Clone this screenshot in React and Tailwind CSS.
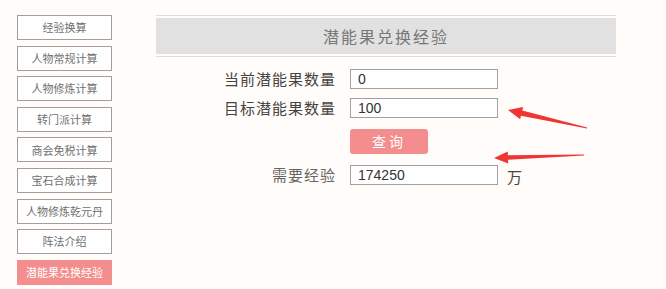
import React from 'react';

const menu = [
    '经验换算',
    '人物常规计算',
    '人物修炼计算',
    '转门派计算',
    '商会免税计算',
    '宝石合成计算',
    '人物修炼乾元丹',
    '阵法介绍',
    '潜能果兑换经验',
];

const CJK = { fontFamily: '"Noto Sans CJK SC", "Noto Sans", sans-serif' };
const NUM = { fontFamily: '"Liberation Sans", "Noto Sans CJK SC", sans-serif' };

function Row({ label, value, suffix, dim }) {
    return (
        <div className="flex items-center">
            <div className={`w-[180px] text-right text-[15px] tracking-[1px] leading-5 ${dim ? 'text-[#666]' : 'text-[#444]'}`}>
                {label}
            </div>
            <input
                readOnly
                value={value}
                style={NUM}
                className="ml-[14px] w-[148px] h-[20px] border border-[#a0a0a0] bg-white px-[7px] text-[14px] text-[#333] outline-none"
            />
            {suffix && <span className="ml-[9px] text-[15px] text-[#444] leading-5 mt-[4px]">{suffix}</span>}
        </div>
    );
}

export default function App() {
    return (
        <div className="relative w-[666px] h-[289px] bg-[#fffcf9] overflow-hidden flex" style={CJK}>
            {/* Sidebar */}
            <div className="pl-[17px] pt-[15px] flex flex-col gap-[5.6px]">
                {menu.map((m, i) => {
                    const active = i === menu.length - 1;
                    return (
                        <div
                            key={m}
                            className={`w-[95px] h-[25px] flex items-center justify-center text-[11px] ${
                                active
                                    ? 'bg-[#f48d8d] text-white'
                                    : 'border border-[#a59c9c] bg-white text-[#707070]'
                            }`}
                        >
                            {m}
                        </div>
                    );
                })}
            </div>

            {/* Main */}
            <div className="ml-[44px] pt-[15px] w-[460px]">
                <div className="border-y border-[#dcdcdc] py-[2px]">
                    <div className="h-[36px] bg-[#e1e1e1] flex items-center justify-center text-[16px] tracking-[2px] text-[#777]">
                        潜能果兑换经验
                    </div>
                </div>

                <div className="mt-[12px] flex flex-col">
                    <Row label="当前潜能果数量" value="0" />
                    <div className="mt-[9px]">
                        <Row label="目标潜能果数量" value="100" />
                    </div>
                    <div className="mt-[11px] pl-[194px]">
                        <button className="w-[78px] h-[25px] rounded-[3px] bg-[#f48d8d] text-white text-[14px] tracking-[3px] flex items-center justify-center">
                            查询
                        </button>
                    </div>
                    <div className="mt-[9px]">
                        <Row label="需要经验" value="174250" suffix="万" dim />
                    </div>
                </div>
            </div>

            {/* Annotation arrows */}
            <svg className="absolute left-0 top-0 pointer-events-none" width="666" height="289" viewBox="0 0 666 289">
                <polygon
                    fill="#f03535"
                    points="508,110 523.1,106.9 522.3,110.5 587.1,127.4 586.9,128.6 521.0,115.7 520.2,119.2"
                />
                <polygon
                    fill="#f03535"
                    points="494,158 507.8,151.5 507.9,155.2 583.98,154.4 584.02,155.6 508.1,159.8 508.2,163.5"
                />
            </svg>
        </div>
    );
}
